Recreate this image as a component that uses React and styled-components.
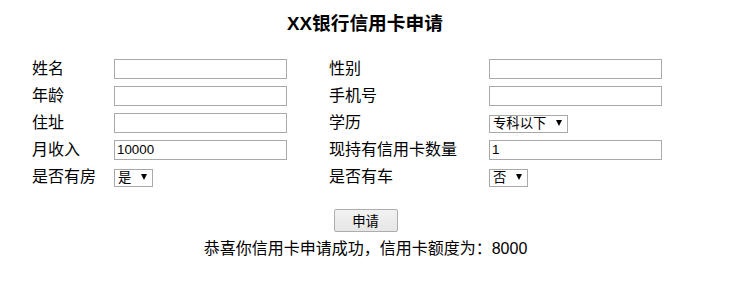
import React from 'react'
import styled, { createGlobalStyle } from 'styled-components'

const GlobalStyle = createGlobalStyle`
  html, body {
    margin: 0;
    padding: 0;
    background: #fff;
  }
  body {
    font-family: "Liberation Sans", "Noto Sans CJK SC", sans-serif;
    color: #000;
  }
`;

const Page = styled.div`
  width: 738px;
  padding: 13px 0 0 0;
  box-sizing: border-box;
`;

const Title = styled.h3`
  margin: 0 8px 0 0;
  font-size: 18.72px;
  line-height: 22px;
  font-weight: bold;
  text-align: center;
`;

const Form = styled.form`
  display: flex;
  flex-direction: column;
  align-items: center;
  margin: 0;
  padding-right: 7px;
`;

const Fields = styled.div`
  align-self: stretch;
  display: grid;
  grid-template-columns: 82px 215px 160px 173px;
  grid-auto-rows: 27px;
  align-items: center;
  padding-left: 32px;
  margin-top: 20px;
`;

const Label = styled.label`
  font-size: 16px;
  line-height: 20px;
  white-space: nowrap;
`;

const TextInput = styled.input`
  box-sizing: border-box;
  width: 173px;
  height: 20px;
  margin: 0;
  padding: 0 2px;
  border: 1px solid #a9a9a9;
  border-radius: 0;
  font-family: "Liberation Sans", "Noto Sans CJK SC", sans-serif;
  font-size: 13.33px;
  color: #000;
  outline: none;
`;

const SelectWrap = styled.span`
  position: relative;
  display: inline-block;
  justify-self: start;
  height: 18px;
`;

const Select = styled.select`
  appearance: none;
  -webkit-appearance: none;
  box-sizing: border-box;
  height: 18px;
  margin: 0;
  padding: 0 20px 0 3px;
  border: 1px solid #a9a9a9;
  border-radius: 0;
  background: #fff;
  font-family: "Liberation Sans", "Noto Sans CJK SC", sans-serif;
  font-size: 13.33px;
  line-height: 16px;
  color: #000;
  outline: none;
`;

const Arrow = styled.span`
  position: absolute;
  right: 6px;
  top: 6px;
  width: 0;
  height: 0;
  border-left: 3.5px solid transparent;
  border-right: 3.5px solid transparent;
  border-top: 6px solid #000;
  pointer-events: none;
`;

const Submit = styled.button`
  box-sizing: border-box;
  width: 64px;
  height: 23px;
  margin: 19px 0 0 0;
  padding: 0;
  border: 1px solid #adadad;
  border-radius: 2px;
  background: linear-gradient(#f2f2f2, #e6e6e6);
  font-family: "Liberation Sans", "Noto Sans CJK SC", sans-serif;
  font-size: 13.33px;
  color: #000;
`;

const Result = styled.p`
  margin: 7px 0 0 0;
  font-size: 16px;
  line-height: 20px;
  text-align: center;
`;

function Dropdown({ options, value }) {
  return (
    <SelectWrap>
      <Select defaultValue={value}>
        {options.map(o => <option key={o}>{o}</option>)}
      </Select>
      <Arrow />
    </SelectWrap>
  );
}

export default function App() {
  return (
    <Page>
      <GlobalStyle />
      <Title>XX银行信用卡申请</Title>
      <Form onSubmit={e => e.preventDefault()}>
        <Fields>
          <Label>姓名</Label>
          <TextInput />
          <Label>性别</Label>
          <TextInput />

          <Label>年龄</Label>
          <TextInput />
          <Label>手机号</Label>
          <TextInput />

          <Label>住址</Label>
          <TextInput />
          <Label>学历</Label>
          <Dropdown options={['专科以下', '本科', '硕士']} value="专科以下" />

          <Label>月收入</Label>
          <TextInput defaultValue="10000" />
          <Label>现持有信用卡数量</Label>
          <TextInput defaultValue="1" />

          <Label>是否有房</Label>
          <Dropdown options={['是', '否']} value="是" />
          <Label>是否有车</Label>
          <Dropdown options={['是', '否']} value="否" />
        </Fields>
        <Submit type="submit">申请</Submit>
        <Result>恭喜你信用卡申请成功，信用卡额度为：8000</Result>
      </Form>
    </Page>
  );
}
